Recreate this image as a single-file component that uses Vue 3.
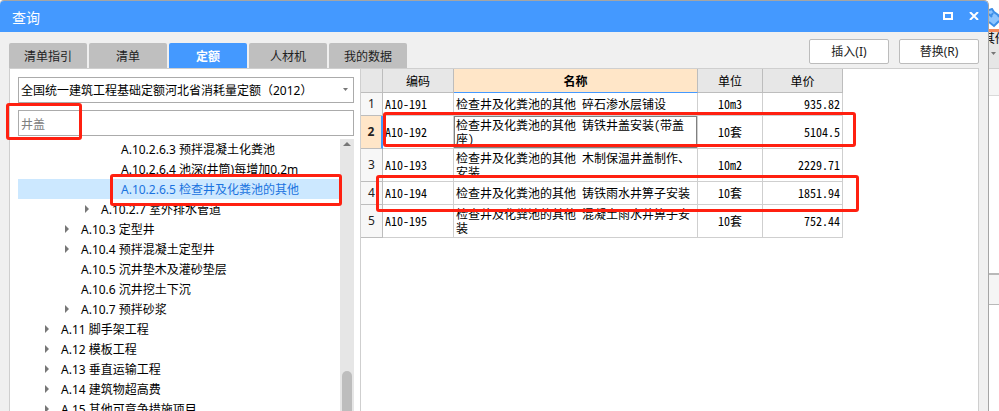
<template>
    <div class="screen">
        <section class="window">
            <header class="titlebar">
                <h1 class="window-title">查询</h1>
                <div class="window-actions">
                    <button type="button" class="icon-btn" aria-label="最大化">
                        <svg width="10" height="8" viewBox="0 0 10 8">
                            <path d="M0 0H10V8H0ZM2 2V6H8V2Z" fill="#fff" fill-rule="evenodd" />
                        </svg>
                    </button>
                    <button type="button" class="icon-btn" aria-label="关闭">
                        <svg width="10" height="8" viewBox="0 0 10 8">
                            <path d="M1 0L9 8M9 0L1 8" stroke="#fff" stroke-width="2" />
                        </svg>
                    </button>
                </div>
            </header>

            <div class="toolbar">
                <nav class="tabs">
                    <button v-for="tab in tabs" :key="tab" type="button" class="tab"
                        :class="{ active: tab === activeTab }" @click="activeTab = tab">{{ tab }}</button>
                </nav>
                <div class="actions">
                    <button type="button" class="action">插入(I)</button>
                    <button type="button" class="action">替换(R)</button>
                </div>
            </div>

            <div class="content">
                <aside class="sidebar">
                    <div class="select-wrap">
                        <select v-model="library" class="field library" aria-label="定额库">
                            <option>全国统一建筑工程基础定额河北省消耗量定额（2012）</option>
                        </select>
                        <svg class="caret" width="5" height="3" viewBox="0 0 5 3">
                            <path d="M0 0H5L2.5 3Z" fill="#777" />
                        </svg>
                    </div>
                    <input v-model="keyword" class="field keyword" type="text" aria-label="搜索" />
                    <div class="tree-wrap">
                        <ul class="tree">
                            <li v-for="node in nodes" :key="node.text" class="node"
                                :class="['level-' + node.level, { selected: node.text === selected }]"
                                @click="selected = node.text">
                                <svg v-if="node.expandable" class="arrow" width="4" height="8" viewBox="0 0 4 8">
                                    <path d="M0 0L4 4L0 8Z" fill="#777" />
                                </svg>
                                <span class="node-text">{{ node.text }}</span>
                            </li>
                        </ul>
                        <div class="scrollbar">
                            <svg class="scroll-up" width="8" height="4" viewBox="0 0 8 4">
                                <path d="M4 0L8 4H0Z" fill="#777" />
                            </svg>
                            <div class="thumb"></div>
                        </div>
                    </div>
                </aside>

                <main class="results">
                    <table class="grid">
                        <colgroup>
                            <col class="col-index" />
                            <col class="col-code" />
                            <col class="col-name" />
                            <col class="col-unit" />
                            <col class="col-price" />
                        </colgroup>
                        <thead>
                            <tr>
                                <th></th>
                                <th>编码</th>
                                <th class="sorted">名称</th>
                                <th>单位</th>
                                <th>单价</th>
                            </tr>
                        </thead>
                        <tbody>
                            <tr v-for="(row, i) in rows" :key="row.code"
                                :class="{ tall: row.name.includes('\n'), current: i === 1 }">
                                <th scope="row">{{ i + 1 }}</th>
                                <td>{{ row.code }}</td>
                                <td class="name">{{ row.name }}</td>
                                <td class="unit">{{ row.unit }}</td>
                                <td class="price">{{ row.price }}</td>
                            </tr>
                        </tbody>
                    </table>
                </main>
            </div>
        </section>

        <!-- 主程序窗口露出的部分 -->
        <aside class="behind">
            <div class="ribbon-icon">
                <svg width="10" height="20" viewBox="0 0 10 20">
                    <path d="M0 2L3 1L5 4L9 7L10 8V13L5 18L0 14Z" fill="#8cc4ff" />
                    <path d="M0 2L3 1L5 4L9 7L10 9M0 14L5 18L10 13M0 6L3 9M4 5L2 8" stroke="#3d8fe8"
                        stroke-width="2" fill="none" />
                </svg>
            </div>
            <div class="ribbon-label">
                <span class="ribbon-text">其他</span>
                <svg width="5" height="3" viewBox="0 0 5 3">
                    <path d="M0 0H5L2.5 3Z" fill="#777" />
                </svg>
            </div>
            <div class="ribbon-foot"></div>
            <div class="pane"></div>
            <div class="pane-head"></div>
        </aside>

        <!-- 标注框 -->
        <div class="mark mark-keyword"></div>
        <div class="mark mark-node"></div>
        <div class="mark mark-row-2"></div>
        <div class="mark mark-row-4"></div>
    </div>
</template>

<script setup>
import { ref } from 'vue';

const tabs = ['清单指引', '清单', '定额', '人材机', '我的数据'];
const activeTab = ref('定额');
const library = ref('全国统一建筑工程基础定额河北省消耗量定额（2012）');
const keyword = ref('井盖');
const selected = ref('A.10.2.6.5 检查井及化粪池的其他');

const nodes = [
    { text: 'A.10.2.6.3 预拌混凝土化粪池', level: 4 },
    { text: 'A.10.2.6.4 池深(井筒)每增加0.2m', level: 4 },
    { text: 'A.10.2.6.5 检查井及化粪池的其他', level: 4 },
    { text: 'A.10.2.7 室外排水管道', level: 3, expandable: true },
    { text: 'A.10.3 定型井', level: 2, expandable: true },
    { text: 'A.10.4 预拌混凝土定型井', level: 2, expandable: true },
    { text: 'A.10.5 沉井垫木及灌砂垫层', level: 2 },
    { text: 'A.10.6 沉井挖土下沉', level: 2 },
    { text: 'A.10.7 预拌砂浆', level: 2, expandable: true },
    { text: 'A.11 脚手架工程', level: 1, expandable: true },
    { text: 'A.12 模板工程', level: 1, expandable: true },
    { text: 'A.13 垂直运输工程', level: 1, expandable: true },
    { text: 'A.14 建筑物超高费', level: 1, expandable: true },
    { text: 'A.15 其他可竞争措施项目', level: 1, expandable: true },
];

const rows = [
    { code: 'A10-191', name: '检查井及化粪池的其他 碎石渗水层铺设', unit: '10m3', price: '935.82' },
    { code: 'A10-192', name: '检查井及化粪池的其他 铸铁井盖安装(带盖\n座)', unit: '10套', price: '5104.5' },
    { code: 'A10-193', name: '检查井及化粪池的其他 木制保温井盖制作、\n安装', unit: '10m2', price: '2229.71' },
    { code: 'A10-194', name: '检查井及化粪池的其他 铸铁雨水井箅子安装', unit: '10套', price: '1851.94' },
    { code: 'A10-195', name: '检查井及化粪池的其他 混凝土雨水井箅子安\n装', unit: '10套', price: '752.44' },
];
</script>

<style>
body {
    margin: 0;
    background: #fff;
}
</style>

<style scoped>
.screen {
    position: relative;
    display: flex;
    height: 100vh;
    overflow: hidden;
    font-family: "Noto Sans", "Noto Sans CJK SC", sans-serif;
    font-size: 12px;
    line-height: 20px;
    color: #000;
}

.screen * {
    box-sizing: border-box;
}

button,
input,
select {
    font: inherit;
    margin: 0;
    padding: 0;
}

.window {
    flex: 1;
    min-width: 0;
    display: flex;
    flex-direction: column;
    background: #f0f0f0;
    border-top: 1px solid #a5a5a5;
    border-right: 1px solid #a5a5a5;
    border-radius: 4px 5px 0 0;
}

.titlebar {
    display: flex;
    align-items: center;
    justify-content: space-between;
    height: 31px;
    flex: none;
    padding: 0 9px 0 12px;
    background: #4499ff;
    border-radius: 4px 4px 0 0;
}

.window-title {
    margin: 0;
    padding-top: 2px;
    font-size: 14px;
    font-weight: 400;
    color: #fff;
}

.window-actions {
    display: flex;
    gap: 16px;
    padding-bottom: 2px;
}

.icon-btn {
    display: flex;
    border: 0;
    background: none;
}

.toolbar {
    display: flex;
    justify-content: space-between;
    height: 36px;
    flex: none;
    padding: 0 9px;
}

.tabs {
    display: flex;
    align-items: flex-end;
    gap: 2px;
}

.tab {
    width: 78px;
    height: 25px;
    padding-top: 2px;
    border: 0;
    border-radius: 2px 2px 0 0;
    background: #bfbfbf;
    color: #222;
}

.tab.active {
    background: #4499ff;
    color: #fff;
    font-weight: 700;
}

.actions {
    display: flex;
    gap: 10px;
    padding-top: 7px;
}

.action {
    width: 80px;
    height: 25px;
    padding-top: 1px;
    border: 1px solid #bcbcbc;
    border-radius: 2px;
    background: #fff;
    color: #222;
}

.content {
    flex: 1;
    min-height: 0;
    display: flex;
    margin: 0 9px;
    border: 1px solid #cfcfcf;
    border-bottom: 0;
    background: #fff;
}

.sidebar {
    width: 351px;
    flex: none;
    display: flex;
    flex-direction: column;
    gap: 7px;
    padding: 8px 6px 0 8px;
    border-right: 1px solid #cfcfcf;
}

.select-wrap {
    position: relative;
    display: flex;
}

.field {
    width: 100%;
    height: 26px;
    flex: none;
    padding: 1px 2px 0;
    border: 1px solid #ababab;
    border-radius: 0;
    background: #fff;
    color: #000;
    outline: 0;
}

.library {
    appearance: none;
}

.keyword {
    color: #808080;
}

.caret {
    position: absolute;
    right: 6px;
    top: 11px;
}

.tree-wrap {
    flex: 1;
    min-height: 0;
    display: flex;
    margin-top: -4px;
}

.tree {
    flex: 1;
    margin: 0;
    padding: 0;
    list-style: none;
    overflow: hidden;
}

.node {
    display: flex;
    align-items: center;
    height: 20px;
    white-space: nowrap;
}

.node-text {
    padding-top: 2px;
}

.level-1 {
    padding-left: 43px;
}

.level-2 {
    padding-left: 63px;
}

.level-3 {
    padding-left: 83px;
}

.level-4 {
    padding-left: 103px;
}

.node.selected {
    background: #cce8ff;
    color: #1a73e0;
}

.arrow {
    margin-left: -16px;
    margin-right: 12px;
}

.scrollbar {
    width: 14px;
    display: flex;
    flex-direction: column;
    align-items: center;
    justify-content: space-between;
    padding-top: 3px;
    background: #e6e6e6;
}

.thumb {
    width: 10px;
    height: 15%;
    border-radius: 5px 5px 0 0;
    background: #bdbdbd;
}

.results {
    flex: 1;
    min-width: 0;
    overflow: hidden;
}

.grid {
    width: 482px;
    table-layout: fixed;
    border-collapse: separate;
    border-spacing: 0;
    font-family: "Noto Sans Mono CJK SC", "Liberation Serif", "Noto Sans CJK SC", serif;
    line-height: 14px;
}

.col-index {
    width: 22px;
}

.col-code {
    width: 71px;
}

.col-name {
    width: 244px;
}

.col-unit {
    width: 65px;
}

.col-price {
    width: 80px;
}

.grid th,
.grid td {
    height: 23px;
    padding: 0 2px;
    border-right: 1px solid #cfcfcf;
    border-bottom: 1px solid #cfcfcf;
}

.grid th {
    padding: 0;
    border-color: #bdbdbd;
    background: #e7e7e7;
    font-weight: 400;
    text-align: center;
}

.grid thead th {
    height: 24px;
}

.grid tbody th {
    background: #f7f7f7;
    font-family: "Noto Sans", sans-serif;
    color: #222;
}

.grid .tall td {
    height: 33px;
}

.grid thead .sorted {
    border-bottom-color: #4499ff;
    background: #ffe6c8;
    font-weight: 700;
}

.grid .current th {
    border-right: 2px solid #4499ff;
    background: #ffe6c8;
    font-weight: 700;
}

.name {
    white-space: pre-line;
}

.current .name {
    box-shadow: inset 0 0 0 1px #808080;
}

.grid .unit {
    text-align: center;
}

.grid .price {
    text-align: right;
}

.behind {
    width: 10px;
    flex: none;
    display: flex;
    flex-direction: column;
    background: #fff;
    overflow: hidden;
}

.ribbon-icon {
    height: 32px;
    flex: none;
    padding-top: 8px;
    border-bottom: 3px solid #f58a5c;
}

.ribbon-label {
    height: 37px;
    flex: none;
    display: flex;
    flex-direction: column;
    align-items: flex-start;
    padding: 0 2px;
    border-bottom: 1px solid #cfcfcf;
    background: #e6e6e6;
}

.ribbon-text {
    height: 20px;
    line-height: 14px;
    margin-left: -8px;
    white-space: nowrap;
}

.ribbon-foot {
    height: 27px;
    flex: none;
    border-bottom: 1px solid #d9d9d9;
    background: #f5f5f5;
}

.pane {
    height: 179px;
    flex: none;
    border-bottom: 2px solid #b9b9b9;
}

.pane-head {
    height: 30px;
    flex: none;
    border-bottom: 1px solid #b9b9b9;
    background: #f5f5f5;
}

.mark {
    position: absolute;
    border: 3px solid #ff2010;
    border-radius: 3px;
    pointer-events: none;
}

.mark-keyword {
    left: 6px;
    top: 103px;
    width: 76px;
    height: 37px;
}

.mark-node {
    left: 110px;
    top: 174px;
    width: 232px;
    height: 32px;
}

.mark-row-2 {
    left: 383px;
    top: 112px;
    width: 473px;
    height: 35px;
}

.mark-row-4 {
    left: 376px;
    top: 175px;
    width: 483px;
    height: 37px;
}
</style>
